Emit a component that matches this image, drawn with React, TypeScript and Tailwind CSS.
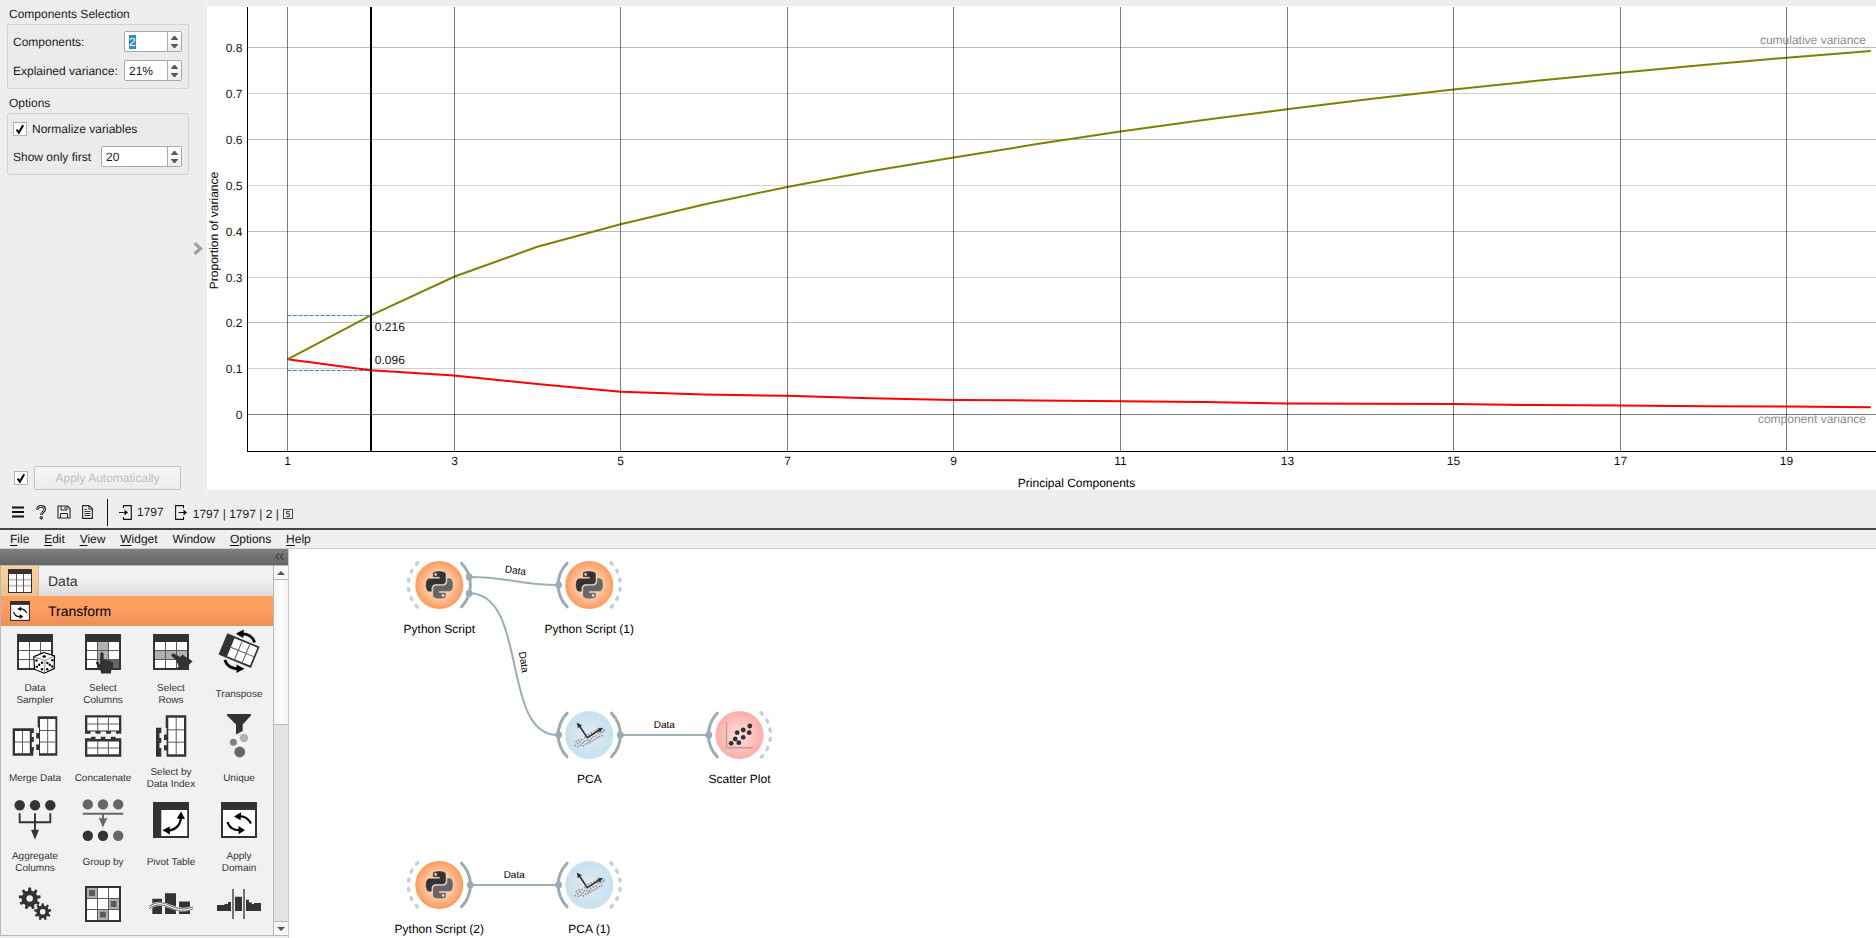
import React from "react";

type Pt = [number, number];

const CUMULATIVE = [359.3, 315.3, 276.8, 246.8, 224.3, 204.6, 186.9, 171.3, 157.6, 144.1, 131.6, 119.9, 109.3, 99.1, 89.5, 80.8, 72.8, 65.1, 57.8, 51];
const COMPONENT = [359.3, 370.3, 375.5, 384.1, 391.7, 394.4, 395.8, 398.2, 400, 400.4, 401.2, 402.1, 403.4, 403.7, 404.1, 405.1, 405.6, 406.3, 406.6, 407.2];
const xAt = (k: number) => 287.5 + (k - 1) * 83.28;
const line = (ys: number[]) => ys.map((y, i) => `${(xAt(i + 1) + (i === 19 ? 1 : 0)).toFixed(1)},${y}`).join(" ");

const GRID_Y: { y: number; label: string; color: string }[] = [
  { y: 47.5, label: "0.8", color: "#bababa" },
  { y: 93.5, label: "0.7", color: "#d0d0d0" },
  { y: 139.5, label: "0.6", color: "#bababa" },
  { y: 185.5, label: "0.5", color: "#d0d0d0" },
  { y: 231.5, label: "0.4", color: "#bababa" },
  { y: 277.5, label: "0.3", color: "#d0d0d0" },
  { y: 322.5, label: "0.2", color: "#bababa" },
  { y: 368.5, label: "0.1", color: "#d0d0d0" },
  { y: 414.5, label: "0", color: "#808080" },
];
const GRID_X = [1, 3, 5, 7, 9, 11, 13, 15, 17, 19];

function VarianceChart() {
  return (
    <svg className="block h-[484px] w-[1669px] bg-white" viewBox="207 6 1669 484" fontSize="12" fill="#111">
      {GRID_Y.map((g) => (
        <line key={g.label} x1="248" x2="1876" y1={g.y} y2={g.y} stroke={g.color} />
      ))}
      <line x1="287.5" x2="370" y1="315.5" y2="315.5" stroke="#308cc6" strokeDasharray="4 1.5" />
      <line x1="287.5" x2="370" y1="370.5" y2="370.5" stroke="#308cc6" strokeDasharray="4 1.5" />
      <polyline points={line(COMPONENT)} fill="none" stroke="#ff0000" strokeWidth="2" />
      <polyline points={line(CUMULATIVE)} fill="none" stroke="#808000" strokeWidth="2" />
      {GRID_X.map((k) => {
        const x = Math.floor(xAt(k) + 0.2) + 0.5;
        return (
          <g key={k}>
            <line x1={x} x2={x} y1="7" y2="451" stroke="#000" strokeOpacity="0.52" />
            <text x={x} y="465" textAnchor="middle">{k}</text>
          </g>
        );
      })}
      <line x1="371" x2="371" y1="7" y2="451" stroke="#000" strokeWidth="2" />
      <line x1="247.5" x2="247.5" y1="7" y2="452" stroke="#000" />
      <line x1="247" x2="1876" y1="451.5" y2="451.5" stroke="#000" />
      {GRID_Y.map((g) => (
        <text key={g.label} x="242.5" y={g.y + 4.5} textAnchor="end">{g.label}</text>
      ))}
      <text x="374.8" y="331">0.216</text>
      <text x="374.8" y="364">0.096</text>
      <text x="1866" y="44" textAnchor="end" fill="#8c8c8c">cumulative variance</text>
      <text x="1866" y="423" textAnchor="end" fill="#8c8c8c">component variance</text>
      <text x="1076.5" y="487" textAnchor="middle" fill="#000">Principal Components</text>
      <text transform="translate(218.3 230.5) rotate(-90)" textAnchor="middle" fill="#000">Proportion of variance</text>
    </svg>
  );
}

function Spin({ value, className, selected }: { value: string; className: string; selected?: boolean }) {
  return (
    <div className={`flex h-[21px] overflow-hidden rounded-[2px] border border-[#a9a9a9] bg-white ${className}`}>
      <div className="flex flex-1 items-center pl-1 leading-[14px]">
        <span className={selected ? "bg-[#308cc6] text-white" : ""}>{value}</span>
      </div>
      <div className="flex w-[14px] flex-col items-center justify-center gap-1 border-l border-[#a9a9a9] bg-gradient-to-b from-white to-[#ececec]">
        <svg className="block h-1 w-[7px]" viewBox="0 0 7 4"><path d="M0 4V3.4L2.8 0H4.2L7 3.4V4Z" fill="#5a5a5a" /></svg>
        <svg className="block h-1 w-[7px]" viewBox="0 0 7 4"><path d="M0 0V.6L2.8 4H4.2L7 .6V0Z" fill="#5a5a5a" /></svg>
      </div>
    </div>
  );
}

function Check() {
  return (
    <div className="flex size-[14px] shrink-0 items-center justify-center border border-[#b4b4b4] bg-white">
      <svg className="block size-3" viewBox="0 0 12 12">
        <path d="M2.6 6.6L4.8 9.6L9.2 2.2" fill="none" stroke="#000" strokeWidth="2" />
      </svg>
    </div>
  );
}

function Sidebar() {
  return (
    <div className="flex h-[490px] w-[207px] flex-col pt-[5px]">
      <div className="pl-[9px] leading-[18px]">Components Selection</div>
      <div className="mt-px ml-[7px] flex h-[65px] w-[182px] flex-col gap-2 rounded-[2px] border border-[#d3d3d3] bg-[#ebebeb] pt-[6px] pr-[6px] pl-[5px]">
        <div className="flex items-center justify-between">
          <span>Components:</span>
          <Spin value="2" selected className="w-[58px]" />
        </div>
        <div className="flex items-center justify-between">
          <span className="whitespace-nowrap">Explained variance:</span>
          <Spin value="21%" className="w-[58px]" />
        </div>
      </div>
      <div className="mt-[5px] pl-[9px] leading-[18px]">Options</div>
      <div className="mt-px ml-[7px] flex h-[62px] w-[182px] flex-col rounded-[2px] border border-[#d3d3d3] bg-[#ebebeb] pt-2 pr-[6px] pl-[5px]">
        <div className="flex h-[14px] items-center gap-[5px]">
          <Check />
          <span>Normalize variables</span>
        </div>
        <div className="mt-[10px] flex items-center justify-between">
          <span>Show only first</span>
          <Spin value="20" className="w-[81px]" />
        </div>
      </div>
      <div className="flex flex-1 items-start justify-end pt-[67px] pr-[4px]">
        <svg className="block h-[13px] w-[10px]" viewBox="0 0 10 13">
          <path d="M1.6 1.2L7.6 6.5L1.6 11.8" fill="none" stroke="#9f9f9f" strokeWidth="3.2" />
        </svg>
      </div>
      <div className="flex h-6 items-center gap-[6px] pl-[14px]">
        <Check />
        <div className="flex h-6 w-[147px] items-center justify-center rounded-[2px] border border-[#c2c2c2] bg-gradient-to-b from-[#f7f7f7] to-[#ececec] text-[#bebebe]">
          Apply Automatically
        </div>
      </div>
    </div>
  );
}

function StatusBar() {
  return (
    <div className="flex h-[38px] items-center pt-[6px]">
      <svg className="ml-3 block h-[12px] w-3" viewBox="0 0 12 12">
        <path d="M0 1.5H12M0 6H12M0 10.5H12" stroke="#111" strokeWidth="2" />
      </svg>
      <svg className="ml-3 block h-[15px] w-[10px]" viewBox="0 0 10 15" fill="none">
        <path d="M1.4 4.8C1.4 2.5 2.8 1.4 5 1.4S8.6 2.6 8.6 4.5C8.6 7 5.4 7 5.4 10" stroke="#222" strokeWidth="2.7" />
        <path d="M1.5 4.3C1.6 2.5 3 1.5 5 1.5S8.4 2.7 8.4 4.5C8.4 6.8 5.3 7 5.3 9.5" stroke="#eee" strokeWidth="0.9" />
        <circle cx="5.3" cy="12.8" r="1.3" stroke="#222" strokeWidth="0.9" fill="#777" />
      </svg>
      <svg className="ml-[11px] block size-[14px]" viewBox="0 0 14 14" fill="none" stroke="#222">
        <path d="M1 1H10.5L13 3.5V13H1Z" strokeWidth="1.1" />
        <path d="M4 1V5H10V1M8 2V4M3.5 13V8.5H10.5V13" />
      </svg>
      <svg className="ml-[11px] block h-[14px] w-[11px]" viewBox="0 0 11 14" fill="none" stroke="#222">
        <path d="M.6 .6H7L10.4 4V13.4H.6Z" strokeWidth="1.1" />
        <path d="M6.8 .6V4.2H10.4M2.5 4.5H5M2.5 6.5H8.5M2.5 8.5H8.5M2.5 10.5H8.5" strokeWidth="0.9" />
      </svg>
      <div className="ml-[14px] h-[27px] w-px bg-[#111]" />
      <svg className="ml-[11px] block h-[15px] w-[13px]" viewBox="0 0 13 15" fill="none" stroke="#111" strokeWidth="1.1">
        <path d="M4.5 3V.6H12.3V14.4H4.5V12M0 7.5H7" />
        <path d="M5.5 4.5L9 7.5L5.5 10.5Z" fill="#111" stroke="none" />
      </svg>
      <span className="ml-[5px]">1797</span>
      <svg className="ml-[11px] block h-[15px] w-[13px]" viewBox="0 0 13 15" fill="none" stroke="#111" strokeWidth="1.1">
        <path d="M8.5 3.2V.6H.6V14.4H8.5V11.8M3.5 7.5H10" />
        <path d="M8.5 4.5L12 7.5L8.5 10.5Z" fill="#111" stroke="none" />
      </svg>
      <span className="ml-[5px] mt-[3px] whitespace-pre">1797 | 1797 | 2 | </span>
      <svg className="mt-[3px] ml-px block size-[10px]" viewBox="0 0 10 10" fill="none" stroke="#333">
        <rect x=".5" y=".5" width="9" height="9" strokeWidth="0.9" />
        <path d="M6.8 2.6H3.6V4.8H6.4V7.4H3.2" strokeWidth="1" />
      </svg>
    </div>
  );
}

const MENU: [string, boolean][] = [["File", true], ["Edit", true], ["View", true], ["Widget", true], ["Window", false], ["Options", true], ["Help", true]];

function MenuBar() {
  return (
    <div className="flex h-[19px] items-center gap-[14.8px] border-b border-[#cfcfcf] bg-[#efefef] pb-px pl-[10px] text-[#111]">
      {MENU.map(([name, mnemonic]) => (
        <span key={name} className="leading-[16px]">
          <span className={mnemonic ? "underline decoration-1 underline-offset-2" : ""}>{name[0]}</span>
          {name.slice(1)}
        </span>
      ))}
    </div>
  );
}

const D = "#333";

function Table({ children, fills = [] }: { children?: React.ReactNode; fills?: [number, number, number, number, string][] }) {
  return (
    <>
      <rect x="6" y="6" width="36" height="36" fill={D} />
      <rect x="8" y="14" width="32" height="26" fill="#fff" />
      {fills.map(([x, y, w, h, c], i) => <rect key={i} x={x} y={y} width={w} height={h} fill={c} />)}
      <path d="M18.5 14V40M29.5 14V40M8 22.5H40M8 31.5H40" stroke="#5a5a5a" strokeWidth="1" />
      {children}
    </>
  );
}

function gear(cx: number, cy: number, r: number, inner: number, teeth: number) {
  const pts: Pt[] = [];
  const step = (Math.PI * 2) / teeth;
  for (let i = 0; i < teeth; i++) {
    const a = i * step - Math.PI / 2;
    const offs: Pt[] = [[-0.3, inner], [-0.17, r], [0.17, r], [0.3, inner]];
    offs.forEach(([o, rad]) => pts.push([cx + Math.cos(a + o * step) * rad, cy + Math.sin(a + o * step) * rad]));
  }
  return "M" + pts.map((p) => p.map((n) => n.toFixed(2)).join(" ")).join("L") + "Z";
}

const SWAP_ARROWS = (
  <g fill="none" stroke="#000" strokeWidth="2.2">
    <path d="M36 27.5C33 22 28 19.5 23 20.5" />
    <path d="M12.5 26C14 31.5 19 35 26 34" />
    <path d="M19 20.5L26 16.2L25.6 24.2Z" fill="#000" stroke="none" />
    <path d="M30 34L23.4 30L23.6 38.2Z" fill="#000" stroke="none" />
  </g>
);

const ICONS: Record<string, React.ReactNode> = {
  sampler: (
    <Table>
      <path d="M33 24.5L43.5 28L43.2 40.5L33.3 45.2L23.5 41.2L22.8 28.7Z" fill="#fff" stroke="#000" strokeWidth="1.2" />
      <path d="M22.8 28.7L34 32.5L43.5 28M34 32.5L33.3 45.2" fill="none" stroke="#555" strokeWidth="0.7" />
      <g fill="#000">
        <ellipse cx="33.2" cy="28.5" rx="1.8" ry="1.2" />
        <circle cx="25.5" cy="32.5" r="1.2" /><circle cx="31" cy="34.8" r="1.2" /><circle cx="25.8" cy="38.8" r="1.2" /><circle cx="31" cy="41.3" r="1.2" /><circle cx="28.2" cy="36.8" r="1.2" />
        <circle cx="36.4" cy="35" r="1.2" /><circle cx="41.4" cy="32.3" r="1.2" /><circle cx="36.2" cy="41.3" r="1.2" /><circle cx="41.2" cy="38.5" r="1.2" /><circle cx="38.8" cy="36.8" r="1.2" />
      </g>
    </Table>
  ),
  columns: (
    <Table fills={[[18.5, 14, 11, 26, "#b0b0b0"], [29.5, 31.5, 10.5, 8.5, "#666"]]}>
      <path d="M21.2 26C21.2 23.6 24.6 23.6 24.6 26V32C26 31 27.6 31.4 28 32.6C29.4 31.8 30.8 32.4 31.2 33.6C33 33 34.4 34 34.3 36C34.3 39.5 33 41.5 32 43V45.5H22V43.5C20.5 41.5 18.5 38.5 17 35.2C16.6 33.4 18.6 33 19.6 34.4L21.2 36.4Z" fill={D} />
    </Table>
  ),
  rows: (
    <Table fills={[[8, 22.5, 32, 9, "#b0b0b0"]]}>
      <path d="M24.6 26.2C25.4 25 27 25.6 28 26.2L33.2 29L35.4 26.4L38 28.4L43 31.4L45.6 33.6L42 36.4L39 40.4H31.5C29.6 39.6 30.6 38.4 33 38C30.8 38 30 36.6 31.6 35.8C29.6 35.6 29 34.2 30.2 33L25.4 29C24.4 28 24.2 27 24.6 26.2Z" fill={D} />
    </Table>
  ),
  transpose: (
    <>
      <g transform="translate(12.3 5.3) rotate(22.4)">
        <rect width="35" height="23" fill={D} />
        <rect x="8.5" y="1.8" width="24.8" height="19.4" fill="#fff" />
        <path d="M16.7 1.8V21.2M25 1.8V21.2M8.5 11.5H33.3" stroke="#5a5a5a" />
      </g>
      <path d="M39.6 14.5C38 9 33 5.5 26.5 5.8" fill="none" stroke="#000" strokeWidth="2.8" />
      <path d="M20.8 5.8L28.8 1.4L28.4 10Z" fill="#000" />
      <path d="M9.8 32C11.5 37 16 40.6 23 40.8" fill="none" stroke="#000" strokeWidth="2.8" />
      <path d="M29.4 40.8L21.6 36.6L21.4 45Z" fill="#000" />
    </>
  ),
  merge: (
    <>
      <path d="M1.7 16.3H22.8V21H20.8V25H22.8V30H20.8V35H22.8V39H22.3V43.7H1.7Z" fill={D} />
      <path d="M4 19H18.8V41.2H4Z" fill="#fff" />
      <path d="M11.5 19V41.2M4 30H18.8" stroke="#5a5a5a" />
      <path d="M26.7 4.3H46.3V43.7H28V38H25.2V32.5H28V26.5H25.2V21H28V15.5H26.7Z" fill={D} />
      <path d="M29 7H44.4V41.2H29Z" fill="#fff" />
      <path d="M36.7 7V41.2M29 18.5H44.4M29 30H44.4" stroke="#5a5a5a" />
    </>
  ),
  concat: (
    <>
      <path d="M6 3.3H42.3V21.7H37V19.5H32V21.7H27V19.5H21.5V21.7H16.5V19.5H11.5V21.7H6Z" fill={D} />
      <path d="M8.3 5.5H40V18.5H8.3Z" fill="#fff" />
      <path d="M18.7 5.5V18.5M29.4 5.5V18.5M8.3 12H40" stroke="#5a5a5a" />
      <path d="M6 26.3H12V24.8H16.5V27H21.7V24.8H26.5V27H31.7V24.8H36.5V26.3H42.3V44.7H6Z" fill={D} />
      <path d="M8.3 29.5H40V42.3H8.3Z" fill="#fff" />
      <path d="M18.7 29.5V42.3M29.4 29.5V42.3M8.3 36H40" stroke="#5a5a5a" />
    </>
  ),
  index: (
    <>
      <path d="M9 15.7H14.3V21H12.5V26H14.3V31H12.5V36H14.3V44.7H9Z" fill={D} />
      <path d="M18.7 3.3H39.3V44.7H19.6V38.5H17V33.3H19.6V28H17V22.5H19.6V16H18.7Z" fill={D} />
      <path d="M21.3 5.7H37V42.3H21.3Z" fill="#fff" />
      <path d="M29.2 5.7V42.3M21.3 17.8H37M21.3 30.2H37" stroke="#5a5a5a" />
    </>
  ),
  unique: (
    <>
      <path d="M12 2H36V3.5L27.7 12.5V19L21 22.4V12.5L12 3.5Z" fill={D} />
      <circle cx="29" cy="26" r="4.2" fill="#b3b3b3" />
      <circle cx="18.4" cy="30.3" r="3.5" fill="#808080" />
      <circle cx="24.7" cy="40" r="5.4" fill="#666" />
    </>
  ),
  aggregate: (
    <g fill={D}>
      <circle cx="8.7" cy="9.2" r="5.2" /><circle cx="24" cy="9.2" r="5.2" /><circle cx="39.3" cy="9.2" r="5.2" />
      <path d="M8.7 17.3V26.2H39.3V17.3M24 17.3V36" fill="none" stroke={D} strokeWidth="1.9" />
      <path d="M20 33.7H28L24 43.7Z" />
    </g>
  ),
  group: (
    <g fill="#666">
      <circle cx="8.8" cy="8.4" r="5.2" /><circle cx="24" cy="8.4" r="5.2" /><circle cx="39.2" cy="8.4" r="5.2" />
      <path d="M3.7 17.8H44.3M24 17.8V25" stroke="#666" strokeWidth="1.9" />
      <path d="M19.6 21.5L24 23L28.4 21.5L24 31.5Z" />
      <circle cx="8.8" cy="39.7" r="5.2" fill={D} /><circle cx="24" cy="39.7" r="5.2" fill={D} /><circle cx="39.2" cy="39.7" r="5.2" />
    </g>
  ),
  pivot: (
    <>
      <rect x="6" y="6" width="36" height="36" fill={D} />
      <rect x="14.3" y="14" width="25.9" height="26" fill="#fff" />
      <path d="M20 34.5C28.5 34.5 34 29 34 20" fill="none" stroke="#000" strokeWidth="2.2" />
      <path d="M34 15.4L38 23L29.8 22.6Z M15.4 34.3L22.6 30.4L23 38.4Z" fill="#000" />
    </>
  ),
  domain: (
    <>
      <rect x="6" y="6" width="36" height="36" fill={D} />
      <rect x="8" y="14" width="32" height="26" fill="#fff" />
      {SWAP_ARROWS}
    </>
  ),
  gears: (
    <>
      <path d={gear(18.7, 18.5, 11, 8, 9)} fill={D} />
      <circle cx="18.7" cy="18.5" r="3.2" fill="#f1f1f1" />
      <path d={gear(31.7, 31.7, 8.6, 6.3, 9)} fill={D} />
      <circle cx="31.7" cy="31.7" r="2.8" fill="#f1f1f1" />
    </>
  ),
  matrix: (
    <>
      <rect x="6" y="6" width="36" height="36" fill={D} />
      <rect x="8" y="8" width="32" height="32" fill="#fff" />
      <path d="M8 8H18.5V18.5H8ZM29.5 18.5H40V29.5H29.5ZM18.5 29.5H29.5V40H18.5Z" fill="#b0b0b0" />
      <path d="M10 10H16V16H10ZM31.8 21H37.5V27H31.8ZM21 31.8H27V37.5H21Z" fill="#5a5a5a" />
      <path d="M18.5 8V40M29.5 8V40M8 18.5H40M8 29.5H40" stroke="#5a5a5a" />
    </>
  ),
  waves: (
    <>
      <path d="M5.3 18.7H15V34H5.3ZM18 13.3H29V34H18ZM32 21.5H43V34H32Z" fill={D} />
      <path d="M2 27.5C10 21.5 17 23.5 23 26.5C31 30 38 31.5 46 27.5" fill="none" stroke="#f1f1f1" strokeWidth="3.8" />
      <path d="M2 26.5C10 20.5 17 22.5 23 25.5C31 29 38 30.5 46 26.5" fill="none" stroke="#666" strokeWidth="1" />
      <path d="M2 28.7C10 22.8 17 24.8 23 27.8C31 31.3 38 32.8 46 28.7" fill="none" stroke="#666" strokeWidth="1" />
    </>
  ),
  bars: (
    <>
      <path d="M2 25H9.5V24H13V22H16V31H2ZM20 16.7H27V31H20ZM31 19.7H34V22.5H37V24H39V23H46V31H31Z" fill={D} />
      <path d="M18 9V39M29 9V39" stroke="#666" strokeWidth="1.8" />
    </>
  ),
};

const WIDGETS: [string, string][] = [
  ["sampler", "Data\nSampler"], ["columns", "Select\nColumns"], ["rows", "Select\nRows"], ["transpose", "Transpose"],
  ["merge", "Merge Data"], ["concat", "Concatenate"], ["index", "Select by\nData Index"], ["unique", "Unique"],
  ["aggregate", "Aggregate\nColumns"], ["group", "Group by"], ["pivot", "Pivot Table"], ["domain", "Apply\nDomain"],
  ["gears", ""], ["matrix", ""], ["waves", ""], ["bars", ""],
];

function Toolbox() {
  return (
    <div className="flex h-[389px] w-[289px] flex-col border-r border-[#c4c8ca]">
      <div className="flex h-4 shrink-0 items-start justify-end bg-gradient-to-b from-[#808080] to-[#666] pt-[4px] pr-1">
        <svg className="block h-[7px] w-[9px]" viewBox="0 0 9 7">
          <path d="M4 .5L1 3.5L4 6.5M8.3 .5L5.3 3.5L8.3 6.5" fill="none" stroke="#3e3e3e" strokeWidth="1.2" />
        </svg>
      </div>
      <div className="flex h-[371px] border-t border-b border-l border-[#b4b8b8]">
        <div className="flex w-[272px] flex-col overflow-hidden bg-[#f1f1f1]">
          <div className="flex h-[30px] shrink-0 items-center bg-gradient-to-b from-[#f4f4f4] via-[#efefef] to-[#dcdcdc]">
            <div className="flex h-full w-[38px] items-center justify-center border-r border-[#bdbdbd] bg-gradient-to-b from-[#ffd19c] to-[#efc28d]">
              <svg className="block size-6" viewBox="0 0 24 24">
                <rect width="24" height="24" fill={D} />
                <rect x="1" y="5" width="22" height="18" fill="#fff" />
                <path d="M1 10.7H23M1 16.7H23" stroke="#c8c8c8" strokeWidth="2" />
                <path d="M8.5 5V23M15.5 5V23" stroke="#5a5a5a" />
              </svg>
            </div>
            <span className="pl-[9px] text-sm text-[#333]">Data</span>
          </div>
          <div className="flex h-[30px] shrink-0 items-center bg-gradient-to-b from-[#ffa061] via-[#ff9c5d] to-[#e98f55]">
            <div className="flex w-[38px] items-center justify-center">
              <svg className="block size-5" viewBox="6 6 36 36">
                <rect x="6" y="6" width="36" height="36" fill={D} />
                <rect x="8" y="13" width="32" height="27" fill="#fff" />
                {SWAP_ARROWS}
              </svg>
            </div>
            <span className="pl-[9px] text-sm text-black">Transform</span>
          </div>
          <div className="grid grid-cols-4 text-[10px] leading-[12px] text-[#333]">
            {WIDGETS.map(([icon, label]) => (
              <div key={icon} className="flex h-[84px] flex-col items-center pt-[2px]">
                <svg className="block size-12 shrink-0" viewBox="0 0 48 48">{ICONS[icon]}</svg>
                <div className="mt-[6px] flex h-[25px] items-center text-center">
                  <span className="whitespace-pre">{label}</span>
                </div>
              </div>
            ))}
          </div>
        </div>
        <div className="flex flex-1 flex-col border-l border-[#b4b8b8] bg-[#e3e3e3]">
          <div className="flex h-[14px] items-center justify-center border-b border-[#b9b9b9] bg-[#f8f8f8]">
            <svg className="block h-1 w-2" viewBox="0 0 8 4"><path d="M0 4L4 0L8 4Z" fill="#555" /></svg>
          </div>
          <div className="h-[145px] border-b border-[#b9b9b9] bg-gradient-to-r from-[#f5f5f5] via-[#fcfcfc] to-[#f4f4f4]" />
          <div className="flex-1" />
          <div className="flex h-[14px] items-center justify-center border-t border-[#b9b9b9] bg-[#f8f8f8]">
            <svg className="block h-1 w-2" viewBox="0 0 8 4"><path d="M0 0L4 4L8 0Z" fill="#555" /></svg>
          </div>
        </div>
      </div>
    </div>
  );
}

function PythonGlyph() {
  return (
    <g transform="translate(-13.6 -14) scale(1.14 1.16)" fillRule="evenodd" stroke="#fde3d2" strokeWidth="0.4">
      <path fill={D} d="M14.25.18l.9.2.73.26.59.3.45.32.34.34.25.34.16.33.1.3.04.26.02.2-.01.13V8.5l-.05.63-.13.55-.21.46-.26.38-.3.31-.33.25-.35.19-.35.14-.33.1-.3.07-.26.04-.21.02H8.77l-.69.05-.59.14-.5.22-.41.27-.33.32-.27.35-.2.36-.15.37-.1.35-.07.32-.04.27-.02.21v3.06H3.17l-.21-.03-.28-.07-.32-.12-.35-.18-.36-.26-.36-.36-.35-.46-.32-.59-.28-.73-.21-.88-.14-1.05-.05-1.23.06-1.22.16-1.04.24-.87.32-.71.36-.57.4-.44.42-.33.42-.24.4-.16.36-.1.32-.05.24-.01h.16l.06.01h8.16v-.83H6.18l-.01-2.75-.02-.37.05-.34.11-.31.17-.28.25-.26.31-.23.38-.2.44-.18.51-.15.58-.12.64-.1.71-.06.77-.04.84-.02 1.27.05zm-6.3 1.98l-.23.33-.08.41.08.41.23.34.33.22.41.09.41-.09.33-.22.23-.34.08-.41-.08-.41-.23-.33-.33-.22-.41-.09-.41.09z" />
      <path fill="#666" d="M21.04 6.11l.28.06.32.12.35.18.36.27.36.35.35.47.32.59.28.73.21.88.14 1.04.05 1.23-.06 1.23-.16 1.04-.24.86-.32.71-.36.57-.4.45-.42.33-.42.24-.4.16-.36.09-.32.05-.24.02-.16-.01h-8.22v.82h5.84l.01 2.76.02.36-.05.34-.11.31-.17.29-.25.25-.31.24-.38.2-.44.17-.51.15-.58.13-.64.09-.71.07-.77.04-.84.01-1.27-.04-1.07-.14-.9-.2-.73-.25-.59-.3-.45-.33-.34-.34-.25-.34-.16-.33-.1-.3-.04-.25-.02-.2.01-.13v-5.34l.05-.64.13-.54.21-.46.26-.38.3-.32.33-.24.35-.2.35-.14.33-.1.3-.06.26-.04.21-.02.13-.01h5.84l.69-.05.59-.14.5-.21.41-.28.33-.32.27-.35.2-.36.15-.36.1-.35.07-.32.04-.28.02-.21V6.07h2.09l.14.01zm-6.47 14.25l-.23.33-.08.41.08.41.23.33.33.23.41.08.41-.08.33-.23.23-.33.08-.41-.08-.41-.23-.33-.33-.23-.41-.08-.41.08z" />
    </g>
  );
}

const PCA_DOTS: Pt[] = [
  [-14, 10.5], [-13, 6.5], [-11.5, 8.5], [-11, 11.5], [-10.5, 5], [-9, 7], [-8.5, 10], [-7.5, 4.5], [-6.5, 8], [-6, 11], [-5, 6], [-4.5, 2.5], [-3.5, 9],
  [-2.5, 5.5], [-1, 8], [0, 5.5], [1.5, 3.5], [1, 7], [3, 5.5], [4, 2], [5, -3.5], [5.5, 4.5], [2, -2], [6.5, 1], [7.5, -5], [8, 3], [9, -1.5], [10, 1.5], [10.5, -6.5], [11.5, -2.5], [12.5, .5], [14, -3.5], [15, -5], [-1, -.5], [8, -3.5],
];

function PcaGlyph() {
  return (
    <g>
      {PCA_DOTS.map(([x, y], i) => <circle key={i} cx={x} cy={y} r="1.05" fill="#9c9fa1" />)}
      <path d="M-10 -9.3L-2 2.7L10.5 -5.2" fill="none" stroke={D} strokeWidth="1.6" />
      <path d="M-12.6 -12.6L-7.4 -9.8L-11.4 -6.8ZM13.8 -7.2L10.6 -2.6L8.2 -6.6Z" fill={D} />
    </g>
  );
}

const PLOT_DOTS: Pt[] = [[-8.3, 8.3], [-4.3, 4], [-0.7, 7.7], [-2.3, -2.3], [3.7, -5], [3.7, 2.3], [9.7, -2.3], [10.3, -9]];

function ScatterGlyph() {
  return (
    <g>
      <path d="M-13 -13.3V12.8H13" fill="none" stroke="#b5a3a3" strokeWidth="1.4" />
      {PLOT_DOTS.map(([x, y], i) => <circle key={i} cx={x} cy={y} r="2.4" fill={D} />)}
    </g>
  );
}

type Side = "idle" | "linked";
type NodeSpec = { x: number; y: number; label: string; kind: "python" | "pca" | "scatter"; left: Side; right: Side };

const NODES: NodeSpec[] = [
  { x: 439.3, y: 585, label: "Python Script", kind: "python", left: "idle", right: "linked" },
  { x: 589.3, y: 585, label: "Python Script (1)", kind: "python", left: "linked", right: "idle" },
  { x: 589.3, y: 735, label: "PCA", kind: "pca", left: "linked", right: "linked" },
  { x: 739.5, y: 735, label: "Scatter Plot", kind: "scatter", left: "linked", right: "idle" },
  { x: 439.3, y: 885, label: "Python Script (2)", kind: "python", left: "idle", right: "linked" },
  { x: 589.3, y: 885, label: "PCA (1)", kind: "pca", left: "linked", right: "idle" },
];

function Anchor({ side, flip }: { side: Side; flip?: boolean }) {
  const idle = side === "idle";
  return (
    <path
      transform={flip ? "scale(-1 1)" : undefined}
      d={idle ? "M21.6 -22.2A31 31 0 0 1 21.6 22.2" : "M22.2 -21.8A31.2 31.2 0 0 1 22.2 21.8"}
      fill="none"
      stroke={idle ? "#c6d0d4" : "#9aabb4"}
      strokeWidth={idle ? "3.4" : "3"}
      strokeLinecap="round"
      strokeDasharray={idle ? "1.9 7.5" : undefined}
    />
  );
}

function Canvas() {
  return (
    <svg className="block h-[389px] w-[1587px] bg-white" viewBox="289 549 1587 389" fontSize="12" fill="#000">
      <defs>
        <radialGradient id="python"><stop offset="0" stopColor="#fbe3d4" /><stop offset="0.45" stopColor="#fdcfb0" /><stop offset="1" stopColor="#ff9a5a" /></radialGradient>
        <radialGradient id="pca"><stop offset="0" stopColor="#e1eaf0" /><stop offset="1" stopColor="#c8e0ef" /></radialGradient>
        <radialGradient id="scatter"><stop offset="0" stopColor="#fde3e1" /><stop offset="1" stopColor="#ffaca6" /></radialGradient>
      </defs>
      <g fill="none" stroke="#9cafb8" strokeWidth="2">
        <path d="M469 577C510 577 518 585 558 585" />
        <path d="M469 593.3C529 593.3 500 735 558 735" />
        <path d="M620 735H709M470 885H559" />
      </g>
      {NODES.map((n) => (
        <g key={n.label} transform={`translate(${n.x} ${n.y})`}>
          <Anchor side={n.left} flip />
          <Anchor side={n.right} />
          <circle r="24" fill={`url(#${n.kind})`} />
          {n.kind === "python" ? <PythonGlyph /> : n.kind === "pca" ? <PcaGlyph /> : <ScatterGlyph />}
          <text y="48" textAnchor="middle">{n.label}</text>
        </g>
      ))}
      <g fill="#9aabb4">
        <circle cx="469.2" cy="577" r="3.4" />
        <circle cx="469.2" cy="593.4" r="3.4" />
        <circle cx="558.6" cy="585" r="3.4" />
        <circle cx="558.6" cy="735" r="3.4" />
        <circle cx="620.3" cy="735" r="3.4" />
        <circle cx="708.8" cy="735" r="3.4" />
        <circle cx="470.3" cy="885" r="3.4" />
        <circle cx="558.6" cy="885" r="3.4" />
      </g>
      <g fontSize="10" textAnchor="middle">
        <text transform="translate(515 573.8) rotate(8)">Data</text>
        <text transform="translate(520.4 662.6) rotate(81)">Data</text>
        <text x="664.3" y="728">Data</text>
        <text x="514.2" y="878">Data</text>
      </g>
    </svg>
  );
}

export default function App() {
  return (
    <div className="flex h-[938px] w-[1876px] flex-col overflow-hidden bg-[#eeeeee] font-['Liberation_Sans',Arial,sans-serif] text-[12px] leading-[14px] text-[#1c1c1c] [text-rendering:geometricPrecision]">
      <div className="flex h-[490px] shrink-0">
        <Sidebar />
        <div className="pt-[6px]">
          <VarianceChart />
        </div>
      </div>
      <StatusBar />
      <div className="h-[2px] shrink-0 bg-[#454345]" />
      <MenuBar />
      <div className="flex h-[389px] shrink-0">
        <Toolbox />
        <Canvas />
      </div>
    </div>
  );
}
